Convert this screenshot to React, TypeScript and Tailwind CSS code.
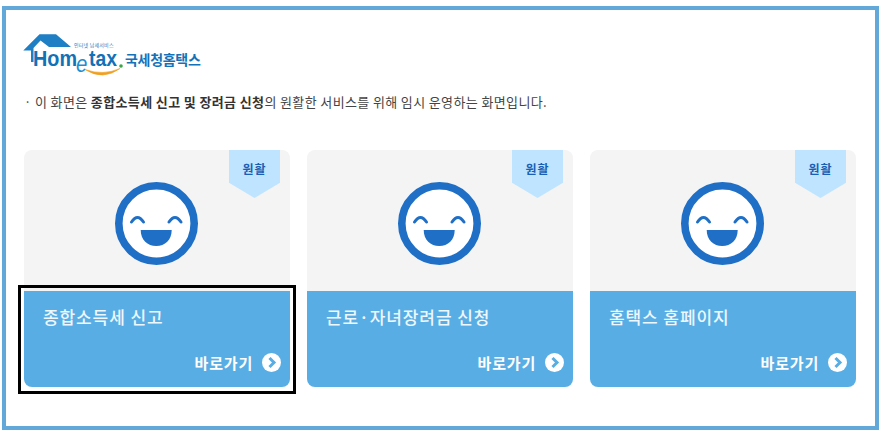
const font = "font-['Noto_Sans_CJK_KR','Noto_Sans',sans-serif]";

const cards = [
  { title: "종합소득세 신고", focused: true },
  { title: "근로·자녀장려금 신청", focused: false },
  { title: "홈택스 홈페이지", focused: false },
];

function Logo() {
  return (
    <svg width="180" height="44" viewBox="0 0 180 44" className="block">
      <path d="M0.300 16.500 L16.500 0.300 L33 0.300 L48 13 L26 13 L17.500 6.500 L10.500 14 L10.500 28 L8 28 L8 16.500 Z" fill="#1f7fc4" />
      <text x="51" y="13" fontSize="5" letterSpacing="0.200" fill="#2a78bd" fontFamily="Noto Sans CJK KR">인터넷 납세서비스</text>
      <text transform="translate(10 32) scale(0.880 1)" fontSize="22.500" fontWeight="700" fill="#1272b8" fontFamily="Liberation Sans">Hom</text>
      <text transform="translate(53 38) scale(0.850 1)" fontSize="24" fontStyle="italic" fill="#1f8ed0" fontFamily="Liberation Sans">e</text>
      <text transform="translate(66 32) scale(0.860 1)" fontSize="22.500" fontWeight="700" fill="#1272b8" fontFamily="Liberation Sans">tax</text>
      <circle cx="98" cy="32" r="1.800" fill="#3aa648" />
      <path d="M62 35.500 Q80 47 97 34.500 Q80 42 62 35.500 Z" fill="#f0a020" stroke="#f0a020" strokeWidth="0.600" />
      <text x="102" y="31" fontSize="14" fontWeight="700" letterSpacing="-0.300" fill="#1672b8" fontFamily="Noto Sans CJK KR">국세청홈택스</text>
    </svg>
  );
}

function Smile() {
  return (
    <svg width="83" height="83" viewBox="0 0 83 83" className="block">
      <circle cx="41.500" cy="41.500" r="37.700" fill="#fff" stroke="#1f6fc6" strokeWidth="7.600" />
      <path d="M16.500 40 Q22.500 31 28.500 40" fill="none" stroke="#1f6fc6" strokeWidth="3" strokeLinecap="round" />
      <path d="M54 40 Q60 31 66 40" fill="none" stroke="#1f6fc6" strokeWidth="3" strokeLinecap="round" />
      <path d="M25.700 48 H56.700 C56.700 58 50 64 41.200 64 C32.500 64 25.700 58 25.700 48 Z" fill="#1f6fc6" />
    </svg>
  );
}

function Go() {
  return (
    <svg width="19" height="19" viewBox="0 0 19 19" className="block">
      <circle cx="9.500" cy="9.500" r="9.500" fill="#fff" />
      <path d="M7.500 5 L12 9.500 L7.500 14" fill="none" stroke="#58aee4" strokeWidth="3" />
    </svg>
  );
}

function Card({ title, focused }: { title: string; focused: boolean }) {
  return (
    <div className="w-[266px] h-[237px] flex flex-col">
      <div className="relative h-[141px] bg-[#f4f4f4] rounded-t-lg flex items-start justify-center pt-[32px] pr-[1px]">
        <div className="absolute top-0 right-[10px] w-[51px] h-[48px] bg-[#bfe4ff] [clip-path:polygon(0_0,100%_0,100%_68%,50%_100%,0_68%)] text-center pt-[11px] text-[12px] leading-[16px] tracking-[1px] font-bold text-[#1a5fb4]">
          원활
        </div>
        <Smile />
      </div>
      <div className="relative flex-1 bg-[#58aee4] rounded-b-lg pt-[14px] pl-[19px] pr-[9px] flex flex-col text-white">
        {focused && <div className="absolute -top-[6px] -left-[6px] -right-[6px] -bottom-[7px] border-[3px] border-black" />}
        <div className="text-[17px] leading-[24px] tracking-[0.900px] font-medium text-[#eef7fd]">{title}</div>
        <div className="mt-[24px] flex items-center justify-end gap-[9px] text-[15px] leading-[19px] tracking-[0.800px] font-semibold">
          바로가기
          <Go />
        </div>
      </div>
    </div>
  );
}

export default function App() {
  return (
    <div className={`${font} w-[882px] h-[433px] bg-white pt-[6px] pl-[2px] overflow-hidden`}>
      <div className="w-[877px] h-[424px] border-4 border-[#62a8d8] pl-[18px] pt-[24px]">
        <div className="-ml-px">
          <Logo />
        </div>
        <p className="mt-[15px] text-[13px] leading-[18px] tracking-[0.370px] text-[#444]">
          · 이 화면은 <b className="font-bold text-[#333]">종합소득세 신고 및 장려금 신청</b>의 원활한 서비스를 위해 임시 운영하는 화면입니다.
        </p>
        <div className="mt-[39px] flex gap-[17px]">
          {cards.map((c) => (
            <Card key={c.title} title={c.title} focused={c.focused} />
          ))}
        </div>
      </div>
    </div>
  );
}
